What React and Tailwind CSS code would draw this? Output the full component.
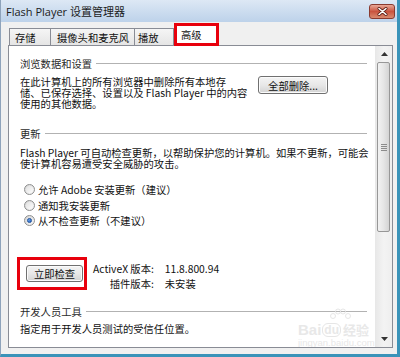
import React from "react";

const SectionTitle = ({ children, className = "" }) => (
  <div className={`flex items-center h-[11px] text-[#2b2b2b] ${className}`}>
    <span className="whitespace-nowrap">{children}</span>
    <div className="ml-[4px] h-px flex-1 bg-[#b2b2b2]" />
  </div>
);

const WinButton = ({ children, className = "" }) => (
  <div
    className={`flex items-center justify-center rounded-[3px] border border-[#707070] bg-gradient-to-b from-[#f4f4f4] via-[#e8e8e8] to-[#d3d3d3] shadow-[inset_0_0_0_1px_#fbfbfb] whitespace-nowrap text-[#111] ${className}`}
  >
    {children}
  </div>
);

const Radio = ({ checked, label }) => (
  <div className="flex items-center h-[15.5px]">
    <span className="ml-[4px] flex h-[11px] w-[11px] items-center justify-center rounded-full border border-[#8e8f8f] bg-gradient-to-br from-[#d4d4d4] to-[#f8f8f8]">
      {checked ? (
        <span className="h-[5px] w-[5px] rounded-full border border-[#1b4f9c] bg-gradient-to-br from-[#7fb2f0] to-[#1c5fc2]" />
      ) : (
        <span className="h-[7px] w-[7px] rounded-full bg-gradient-to-br from-[#e2e2e2] to-[#fcfcfc]" />
      )}
    </span>
    <span className="ml-[3px] whitespace-nowrap">{label}</span>
  </div>
);

const Tab = ({ label, className = "" }) => (
  <div
    className={`flex h-[18px] items-center border-t border-l border-[#898c95] bg-gradient-to-b from-[#f5f5f5] to-[#e4e4e4] text-[#111] whitespace-nowrap ${className}`}
  >
    {label}
  </div>
);

const ScrollArrow = ({ up }) => (
  <div className="flex h-[16px] items-center justify-center">
    <svg width="7" height="4" viewBox="0 0 7 4">
      {up ? (
        <polygon points="0,4 3.5,0 7,4" fill="#333" />
      ) : (
        <polygon points="0,0 3.5,4 7,0" fill="#333" />
      )}
    </svg>
  </div>
);

const App = () => {
  return (
    <div className="flex h-[357px] w-[400px] flex-col border-l border-r-[3px] border-b-[3px] border-l-[#8ea3bb] border-r-[#3a93b9] border-b-[#3a93b9] bg-[#f0f0f0] font-['Noto_Sans_CJK_SC','Noto_Sans',sans-serif] text-[10.3px] leading-[11px] text-[#111] overflow-hidden">
      {/* title bar */}
      <div className="flex h-[22px] shrink-0 justify-between bg-gradient-to-b from-[#dde8f5] to-[#bdd2ea] pl-[5px]">
        <div className="flex items-center font-['Open_Sans','Noto_Sans_CJK_SC',sans-serif] text-[11px] text-[#1b1b1b] whitespace-nowrap">
          Flash Player 设置管理器
        </div>
        <div className="mr-[2px] mt-[4px] flex h-[15px] w-[26px] items-center justify-center rounded-[3px] border border-[#8a3a2f] bg-gradient-to-b from-[#e8a898] via-[#c9533f] to-[#d88a6f]">
          <svg width="11" height="9" viewBox="0 0 11 9">
            <path d="M2 1.5 L9 7.5 M9 1.5 L2 7.5" stroke="#5a1d14" strokeWidth="3" strokeLinecap="round" />
            <path d="M2 1.5 L9 7.5 M9 1.5 L2 7.5" stroke="#ffffff" strokeWidth="1.6" strokeLinecap="round" />
          </svg>
        </div>
      </div>

      {/* tabs */}
      <div className="flex h-[24px] shrink-0 items-end pl-[8px]">
        <Tab label="存储" className="w-[41px] pl-[5px]" />
        <Tab label="摄像头和麦克风" className="w-[84px] pl-[6px]" />
        <Tab label="播放" className="w-[40px] border-r pl-[3px]" />
        <div className="relative z-10 flex h-[23px] w-[45px] items-center border-[3px] border-[#e8000c] bg-white pl-[4px] text-[#111]">
          高级
        </div>
      </div>

      {/* panel */}
      <div className="ml-[7px] -mt-px flex h-[303px] w-[385px] shrink-0 border border-[#898c95] bg-white">
        <div className="relative flex-1 overflow-hidden pl-[11px] pr-[8px] pt-[11.5px]">
          <SectionTitle>浏览数据和设置</SectionTitle>
          <div className="mt-[7.5px] flex items-start">
            <div className="w-[238px] whitespace-nowrap">
              在此计算机上的所有浏览器中删除所有本地存
              <br />
              储、已保存选择、设置以及 Flash Player 中的内容
              <br />
              使用的其他数据。
            </div>
            <WinButton className="h-[18px] w-[70px]">全部删除...</WinButton>
          </div>

          <SectionTitle className="mt-[18.5px]">更新</SectionTitle>
          <div className="mt-[8px] whitespace-nowrap">
            Flash Player 可自动检查更新，以帮助保护您的计算机。如果不更新，可能会
            <br />
            使计算机容易遭受安全威胁的攻击。
          </div>

          <div className="mt-[13.25px]">
            <Radio label="允许 Adobe 安装更新（建议）" />
            <Radio label="通知我安装更新" />
            <Radio checked label="从不检查更新（不建议）" />
          </div>

          <div className="relative mt-[34.25px] flex items-start">
            <WinButton className="ml-[6px] mt-[2.5px] h-[17px] w-[57px]">立即检查</WinButton>
            <div className="pointer-events-none absolute left-[-3px] top-[-5.5px] h-[33px] w-[70px] border-[3px] border-[#e8000c]" />
            <div className="ml-[10px] grid grid-cols-[auto_auto] gap-x-[11px] gap-y-[4px] whitespace-nowrap">
              <span className="text-right">ActiveX 版本:</span>
              <span>11.8.800.94</span>
              <span className="text-right">插件版本:</span>
              <span>未安装</span>
            </div>
          </div>

          <SectionTitle className="mt-[17px]">开发人员工具</SectionTitle>
          <div className="mt-[6px] whitespace-nowrap">指定用于开发人员测试的受信任位置。</div>

          {/* watermark */}
          <div className="pointer-events-none absolute left-[289px] top-[262px] flex w-[80px] flex-col items-start text-[#e8e8e8]">
            <svg width="24" height="14" viewBox="0 0 24 14" className="ml-[30px]">
              <circle cx="5" cy="8" r="2.5" fill="none" stroke="#e6e6e6" />
              <circle cx="10" cy="3.5" r="2.5" fill="none" stroke="#e6e6e6" />
              <circle cx="15" cy="3.5" r="2.5" fill="none" stroke="#e6e6e6" />
              <circle cx="20" cy="8" r="2.5" fill="none" stroke="#e6e6e6" />
            </svg>
            <div className="flex items-end font-['Liberation_Sans',sans-serif] text-[15px] font-bold leading-[15px] whitespace-nowrap">
              <span>Bai</span>
              <span className="ml-[1px] rounded-[6px] border border-[#e6e6e6] px-[1px] text-[12px] leading-[12px]">du</span>
              <span className="ml-[2px] font-['Noto_Sans_CJK_SC',sans-serif] text-[13px] leading-[14px]">经验</span>
            </div>
            <div className="mt-[1px] font-['Liberation_Sans',sans-serif] text-[9.5px] leading-[10px] whitespace-nowrap">
              jingyan.baidu.com
            </div>
          </div>
        </div>

        {/* scrollbar */}
        <div className="flex w-[17px] shrink-0 flex-col border-l border-[#e8e8e8] bg-gradient-to-r from-[#e9e9e9] via-[#f3f3f3] to-[#eeeeee]">
          <ScrollArrow up />
          <div className="flex-1">
            <div className="ml-[1px] flex h-[170px] w-[13px] items-center justify-center rounded-[2px] border border-[#979797] bg-gradient-to-r from-[#f2f2f2] via-[#e6e6e6] to-[#d4d4d4]">
              <div className="flex flex-col gap-[1px]">
                <div className="h-px w-[6px] bg-[#8c8c8c]" />
                <div className="h-px w-[6px] bg-[#8c8c8c]" />
                <div className="h-px w-[6px] bg-[#8c8c8c]" />
                <div className="h-px w-[6px] bg-[#8c8c8c]" />
              </div>
            </div>
          </div>
          <ScrollArrow />
        </div>
      </div>
    </div>
  );
};

export default App;
